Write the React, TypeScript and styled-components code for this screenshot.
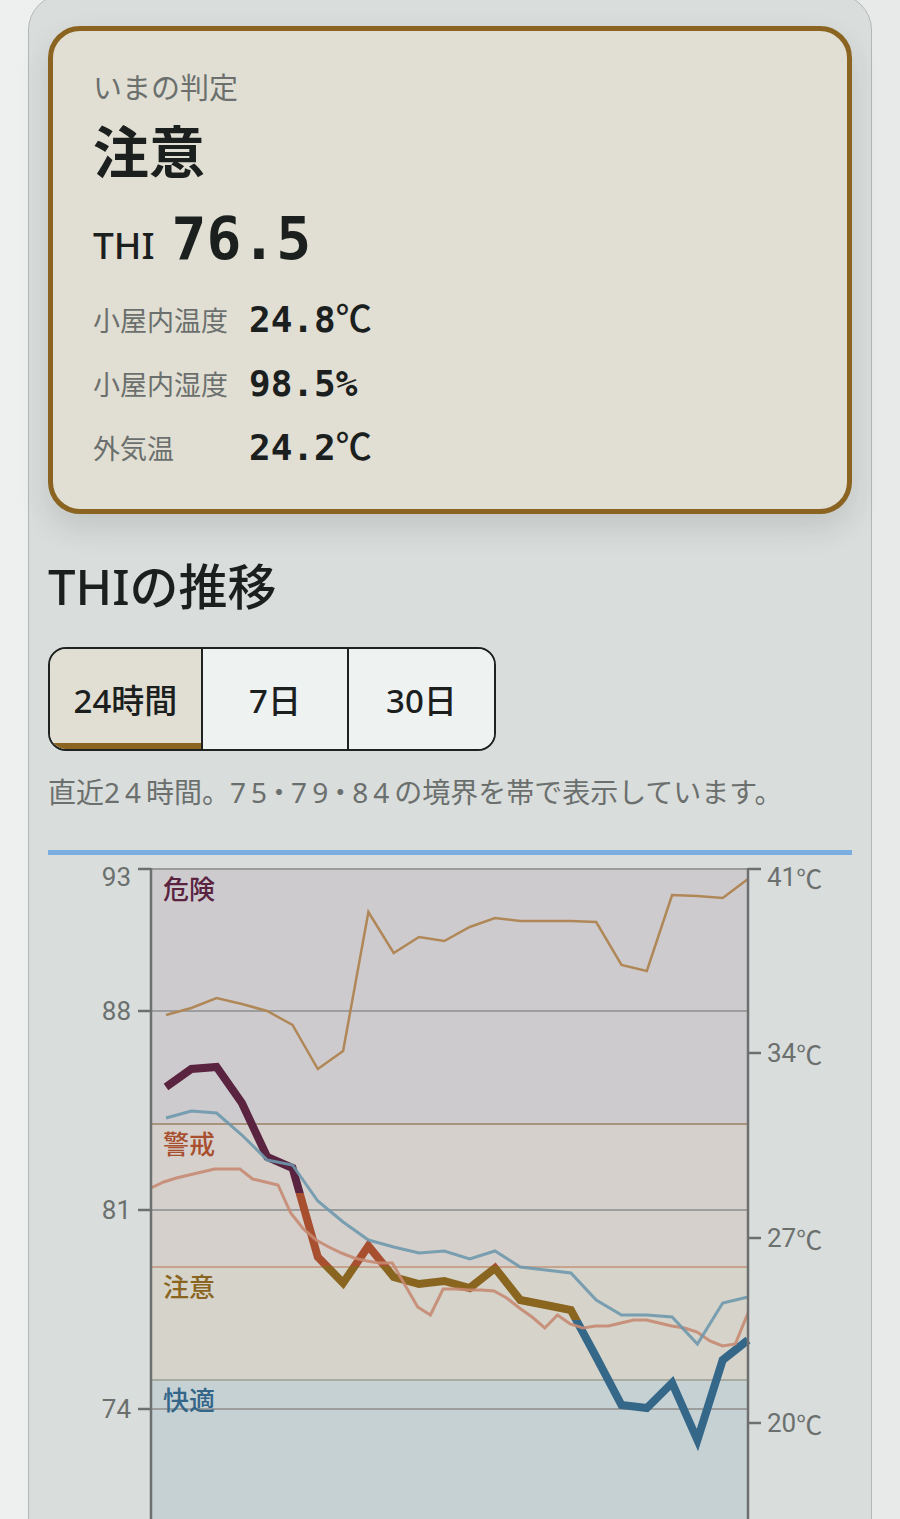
import styled, { createGlobalStyle } from "styled-components";

const GlobalStyle = createGlobalStyle`
  html, body {
    margin: 0;
    padding: 0;
  }
  body {
    background: linear-gradient(90deg, #eef0ef 0%, #e9eceb 50%, #e7eae9 100%);
    font-family: "Noto Sans", "Noto Sans CJK JP", sans-serif;
    color: #1b201f;
  }
`;

const Panel = styled.main`
  margin: -6px 28px 0;
  padding: 31px 19px 40px;
  background: #d9dddc;
  border: 1px solid #b3b7b6;
  border-radius: 36px;
  box-sizing: border-box;
`;

const StatusCard = styled.section`
  background: #e1dfd3;
  border: 5px solid #8a6420;
  border-radius: 32px;
  padding: 35px 40px 37px;
  box-shadow: 0 14px 30px rgba(40, 50, 50, 0.13);
`;

const Caption = styled.div`
  font-family: "Noto Sans CJK JP", sans-serif;
  font-size: 29px;
  line-height: 40px;
  color: #6b6f6d;
`;

const Verdict = styled.div`
  margin-top: 8px;
  font-size: 56px;
  line-height: 70px;
  font-weight: 700;
  font-family: "Noto Sans CJK JP", sans-serif;
`;

const ThiRow = styled.div`
  margin-top: 20px;
  display: flex;
  align-items: baseline;
  gap: 17px;
  line-height: 70px;
`;

const ThiLabel = styled.span`
  font-size: 37px;
  font-weight: 500;
`;

const ThiValue = styled.span`
  font-family: "DejaVu Sans Mono", monospace;
  font-size: 58px;
  font-weight: 700;
`;

const Readings = styled.div`
  margin-top: 16px;
  display: grid;
  grid-template-columns: 156px auto;
  grid-auto-rows: 48px;
  row-gap: 16px;
  align-items: center;
`;

const ReadingLabel = styled.span`
  font-size: 27px;
  line-height: 48px;
  color: #6b6f6d;
  font-family: "Noto Sans CJK JP", sans-serif;
`;

const ReadingValue = styled.span`
  font-family: "DejaVu Sans Mono", monospace;
  font-size: 36px;
  line-height: 48px;
  font-weight: 700;
`;

const Unit = styled.span`
  font-family: "Noto Sans CJK JP", sans-serif;
  font-weight: 500;
  line-height: 1;
`;

const SectionTitle = styled.h2`
  margin: 42px 0 0;
  font-size: 49px;
  line-height: 60px;
  font-weight: 500;
`;

const Segments = styled.div`
  margin-top: 31px;
  display: inline-flex;
  height: 104px;
  border: 2px solid #1e2322;
  border-radius: 18px;
  overflow: hidden;
  box-sizing: border-box;
`;

const Segment = styled.button<{ $active?: boolean; $w: number }>`
  width: ${(p) => p.$w}px;
  border: none;
  border-left: 2px solid #1e2322;
  &:first-child {
    border-left: none;
  }
  background: ${(p) => (p.$active ? "#e1dfd3" : "#eef2f1")};
  box-shadow: ${(p) => (p.$active ? "inset 0 -6px 0 #8a6420" : "none")};
  font-family: "Noto Sans", "Noto Sans CJK JP", sans-serif;
  font-size: 33px;
  font-weight: 500;
  color: #1b201f;
  padding: 0;
  cursor: pointer;
`;

const Note = styled.p`
  margin: 20px 0 0;
  font-family: "Noto Sans CJK JP", sans-serif;
  font-size: 28px;
  line-height: 40px;
  color: #6b6f6d;
`;

const Num = styled.span`
  font-family: "Noto Sans", "Noto Sans CJK JP", sans-serif;
  font-feature-settings: "palt";
  letter-spacing: 5px;
  line-height: 1;
`;

const Rule = styled.div`
  margin-top: 39px;
  height: 5px;
  background: #7aaee0;
`;

const ChartSvg = styled.svg`
  display: block;
  width: 804px;
  height: 690px;
`;

const AxisText = styled.text`
  font-family: "Roboto", "Noto Sans CJK JP", sans-serif;
  font-size: 26px;
  fill: #6b706e;
`;

const AxisUnit = styled.tspan`
  font-family: "Noto Sans CJK JP", sans-serif;
`;

const BandText = styled.text<{ $c: string }>`
  font-family: "Noto Sans CJK JP", sans-serif;
  font-size: 26px;
  font-weight: 500;
  fill: ${(p) => p.$c};
`;

const X0 = 151;
const X1 = 748;
const TOP = 869;
const BOTTOM = 1522;

const stepX = (i: number, n: number, from: number) => from + (i * (X1 - from)) / (n - 1);

const thi = [1087, 1069, 1067, 1103, 1157, 1168, 1257, 1283, 1246, 1277, 1284, 1281, 1288, 1268, 1300, 1305, 1310, 1357, 1405, 1408, 1383, 1440, 1360, 1340];
const innerTemp = [1118, 1111, 1113, 1135, 1160, 1165, 1201, 1222, 1240, 1247, 1253, 1251, 1259, 1251, 1267, 1270, 1273, 1300, 1315, 1315, 1317, 1344, 1303, 1297];
const outerTemp = [1015, 1008, 998, 1004, 1011, 1025, 1069, 1051, 912, 953, 937, 941, 927, 918, 921, 921, 921, 922, 965, 971, 895, 896, 898, 879];
const humidity = [
  1188, 1182, 1178, 1175, 1172, 1169, 1169, 1169, 1179, 1182, 1185, 1213, 1229, 1240, 1247, 1253,
  1258, 1261, 1263, 1263, 1285, 1307, 1315, 1289, 1289, 1290, 1290, 1291, 1298, 1308, 1317, 1328,
  1315, 1324, 1328, 1326, 1326, 1323, 1320, 1320, 1323, 1326, 1328, 1332, 1341, 1346, 1344, 1313,
];

const pts = (ys: number[], from: number) => ys.map((y, i) => `${stepX(i, ys.length, from).toFixed(1)},${y}`).join(" ");

const bands = [
  { from: TOP, to: 1124, fill: "#cecbcf", label: "危険", color: "#5a2340" },
  { from: 1124, to: 1267, fill: "#d6d0cd", label: "警戒", color: "#a84f2e" },
  { from: 1267, to: 1380, fill: "#d5d3ca", label: "注意", color: "#8a6520" },
  { from: 1380, to: BOTTOM, fill: "#c6d1d4", label: "快適", color: "#336688" },
];

const leftTicks = [
  { y: 869, label: "93", ty: 877 },
  { y: 1011, label: "88", ty: 1011 },
  { y: 1210, label: "81", ty: 1210 },
  { y: 1409, label: "74", ty: 1409 },
];
const rightTicks = [
  { y: 869, label: "41", ty: 877 },
  { y: 1053, label: "34", ty: 1053 },
  { y: 1238, label: "27", ty: 1238 },
  { y: 1423, label: "20", ty: 1423 },
];

function ThiChart() {
  return (
    <ChartSvg viewBox="48 855 804 690">
      <defs>
        <linearGradient id="thiStroke" gradientUnits="userSpaceOnUse" x1="0" y1={TOP} x2="0" y2={BOTTOM}>
          <stop offset="0.496" stopColor="#5a2340" />
          <stop offset="0.496" stopColor="#a84f30" />
          <stop offset="0.608" stopColor="#a84f30" />
          <stop offset="0.608" stopColor="#8a6520" />
          <stop offset="0.69" stopColor="#8a6520" />
          <stop offset="0.69" stopColor="#356789" />
        </linearGradient>
      </defs>

      {bands.map((b) => (
        <rect key={b.label} x={X0} y={b.from} width={X1 - X0} height={b.to - b.from} fill={b.fill} />
      ))}
      <line x1={X0} x2={X1} y1={TOP} y2={TOP} stroke="#9a9b9b" strokeWidth="2" />
      {leftTicks.slice(1).map((t) => (
        <line key={t.label} x1={X0} x2={X1} y1={t.y} y2={t.y} stroke="#9c9d9d" strokeWidth="2" />
      ))}
      <line x1={X0} x2={X1} y1={1124} y2={1124} stroke="#a8937c" strokeWidth="2" />
      <line x1={X0} x2={X1} y1={1267} y2={1267} stroke="#c7a38d" strokeWidth="2" />
      <line x1={X0} x2={X1} y1={1380} y2={1380} stroke="#a9aaa0" strokeWidth="2" />

      {bands.map((b) => (
        <BandText key={b.label} $c={b.color} x={163} y={b.from + 30}>
          {b.label}
        </BandText>
      ))}

      <polyline points={pts(thi, 166)} fill="none" stroke="url(#thiStroke)" strokeWidth="8" strokeLinejoin="miter" />
      <polyline points={pts(outerTemp, 166)} fill="none" stroke="#b08858" strokeWidth="2.5" />
      <polyline points={pts(humidity, X0)} fill="none" stroke="#c68a72" strokeWidth="3" opacity="0.9" />
      <polyline points={pts(innerTemp, 166)} fill="none" stroke="#6e98ad" strokeWidth="3" opacity="0.9" />

      <line x1={X0} x2={X0} y1={TOP - 1} y2={BOTTOM} stroke="#6e7070" strokeWidth="2.5" />
      <line x1={X1} x2={X1} y1={TOP - 1} y2={BOTTOM} stroke="#6e7070" strokeWidth="2.5" />
      {leftTicks.map((t) => (
        <g key={t.label}>
          <line x1={138} x2={X0} y1={t.y} y2={t.y} stroke="#6e7070" strokeWidth="2.5" />
          <AxisText x={131} y={t.ty} textAnchor="end" dominantBaseline="central">
            {t.label}
          </AxisText>
        </g>
      ))}
      {rightTicks.map((t) => (
        <g key={t.label}>
          <line x1={X1} x2={761} y1={t.y} y2={t.y} stroke="#6e7070" strokeWidth="2.5" />
          <AxisText x={767} y={t.ty} dominantBaseline="central">
            {t.label}
            <AxisUnit>℃</AxisUnit>
          </AxisText>
        </g>
      ))}
    </ChartSvg>
  );
}

export default function App() {
  return (
    <>
      <GlobalStyle />
      <Panel>
        <StatusCard>
          <Caption>いまの判定</Caption>
          <Verdict>注意</Verdict>
          <ThiRow>
            <ThiLabel>THI</ThiLabel>
            <ThiValue>76.5</ThiValue>
          </ThiRow>
          <Readings>
            <ReadingLabel>小屋内温度</ReadingLabel>
            <ReadingValue>
              24.8<Unit>℃</Unit>
            </ReadingValue>
            <ReadingLabel>小屋内湿度</ReadingLabel>
            <ReadingValue>98.5%</ReadingValue>
            <ReadingLabel>外気温</ReadingLabel>
            <ReadingValue>
              24.2<Unit>℃</Unit>
            </ReadingValue>
          </Readings>
        </StatusCard>

        <SectionTitle>THIの推移</SectionTitle>
        <Segments>
          <Segment $active $w={151}>24時間</Segment>
          <Segment $w={146}>7日</Segment>
          <Segment $w={147}>30日</Segment>
        </Segments>
        <Note>
          直近<Num>24</Num>時間。<Num>75・79・84</Num>の境界を帯で表示しています。
        </Note>
        <Rule />
        <ThiChart />
      </Panel>
    </>
  );
}
